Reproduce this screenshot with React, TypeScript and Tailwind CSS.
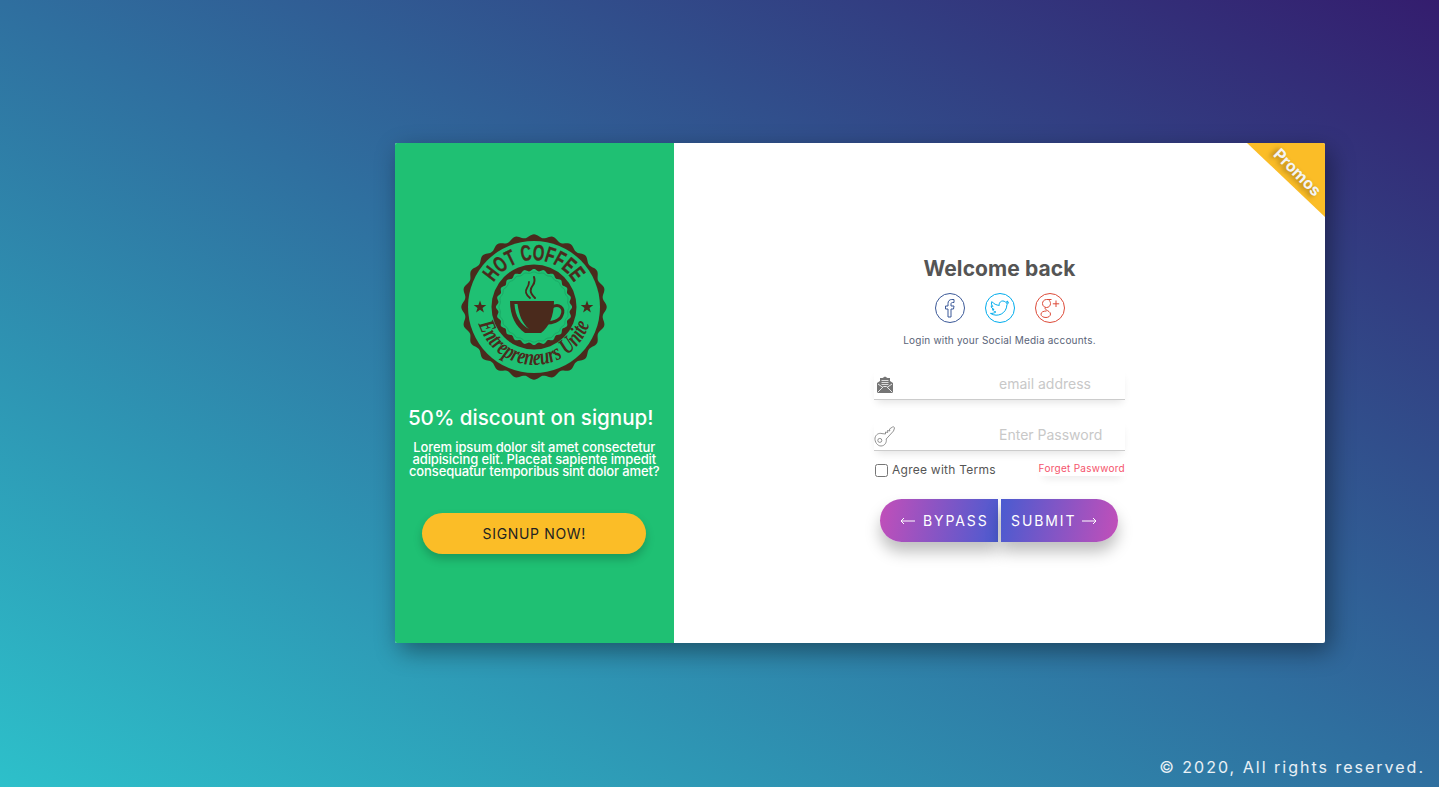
const FONT = "font-['Inter','Noto_Sans',sans-serif]";

// wavy edge of the badge, r swings around the base radius
function scallop(r: number, amp: number, waves: number) {
  const pts: string[] = [];
  for (let i = 0; i < 360; i++) {
    const t = (i / 360) * Math.PI * 2;
    const rr = r + amp * Math.cos(waves * t);
    pts.push(`${(75 + rr * Math.sin(t)).toFixed(2)},${(75 - rr * Math.cos(t)).toFixed(2)}`);
  }
  return pts.join(' ');
}

function Badge() {
  const dark = '#4a2a1c';
  const green = '#1fc073';
  return (
    <svg width="150" height="150" viewBox="0 0 150 150">
      <defs>
        <path id="arcTop" d="M 28 75 A 47 47 0 0 1 122 75" fill="none" />
        <path id="arcBottom" d="M 17 75 A 58 58 0 0 0 133 75" fill="none" />
      </defs>
      <polygon points={scallop(71, 1.7, 24)} fill={dark} />
      <circle cx="75" cy="75" r="66" fill={green} />
      <circle cx="75" cy="75" r="42.5" fill={dark} />
      <polygon points={scallop(37, 1.1, 24)} fill={green} />
      <polygon points={scallop(34.5, 0.6, 24)} fill="none" stroke="#179a5c" strokeWidth="0.6" />
      <text fontFamily="'Liberation Sans Narrow', 'Liberation Sans', sans-serif" fontWeight="700" fontSize="22" fill={dark} stroke={dark} strokeWidth="0.4">
        <textPath href="#arcTop" startOffset="50%" textAnchor="middle" textLength="96" lengthAdjust="spacingAndGlyphs">
          HOT COFFEE
        </textPath>
      </text>
      <text fontFamily="'Liberation Serif', serif" fontStyle="italic" fontWeight="700" fontSize="23" fill={dark}>
        <textPath href="#arcBottom" startOffset="50%" textAnchor="middle" textLength="148" lengthAdjust="spacingAndGlyphs">
          Entrepreneurs Unite
        </textPath>
      </text>
      <polygon points="21,68.5 22.6,73 27.3,73 23.5,75.9 24.9,80.4 21,77.7 17.1,80.4 18.5,75.9 14.7,73 19.4,73" fill={dark} />
      <polygon points="128,68.5 129.6,73 134.3,73 130.5,75.9 131.9,80.4 128,77.7 124.1,80.4 125.5,75.9 121.7,73 126.4,73" fill={dark} />
      {/* cup */}
      <path d="M51 69 H95 C95 84 90 95 82 101 H66 C57 95 51 84 51 69 Z" fill={dark} />
      <path d="M93 75 C100 71 106 76 103 83 C101 89 93 91 87 91" fill="none" stroke={dark} strokeWidth="3" />
      <path d="M55.5 72 C56 84 62 93 70 97 C63 91 60 83 58.5 72 Z" fill={green} />
      <path d="M76 66 C70 60 71 57 74 53 C76 50 76 48 75 45" fill="none" stroke={dark} strokeWidth="2" strokeLinecap="round" />
      <path d="M71 66 C66 62 66 59 68 56 C70 53 70 52 70 50" fill="none" stroke={dark} strokeWidth="1.8" strokeLinecap="round" />
    </svg>
  );
}

function MailIcon() {
  return (
    <svg width="18" height="18" viewBox="0 0 18 18" className="absolute left-[2px] top-[6px]">
      <path d="M1 7 L4 5 V2 H6.5 L9 0.5 L11.5 2 H14 V5 L17 7 V17 H1 Z" fill="#757575" />
      <path d="M5.5 4.5 H12.5 M5.5 6.5 H12.5 M5.5 8.5 H12.5" stroke="#e6e6e6" strokeWidth="0.9" />
      <path d="M1.5 16.5 L7.5 10.5 H10.5 L16.5 16.5 M2 8 L7 11.5 M16 8 L11 11.5" fill="none" stroke="#e6e6e6" strokeWidth="1" />
    </svg>
  );
}

function KeyIcon() {
  return (
    <svg width="21" height="21" viewBox="0 0 21 21" className="absolute left-[0px] top-[5px]" fill="none" stroke="#777" strokeWidth="0.8">
      <path d="M8 7.6 C5 6.6 1.6 8.5 1 12 C0.5 16 3.5 20 7 20 C10.5 20 13 16.5 12.2 13 L19.5 5 L20.5 2 C20.3 1 19.5 0.5 18.5 1 L15.5 3 L15.8 5 L13.5 4.5 L13.7 6.5 L11.5 6 L11.5 8 Z" />
      <circle cx="5.8" cy="14.4" r="2" />
    </svg>
  );
}

function FacebookIcon() {
  return (
    <svg width="20" height="20" viewBox="0 0 20 20" fill="none" stroke="currentColor" strokeWidth="1">
      <path d="M8 19 V11 H5.5 V8 H8 V5.5 C8 3 9.5 1.5 11.8 1.5 H14 V4.5 H12.5 C11.5 4.5 11 5 11 6 V8 H14 L13.5 11 H11 V19 Z" />
    </svg>
  );
}

function TwitterIcon() {
  return (
    <svg width="20" height="20" viewBox="0 0 20 20" fill="none" stroke="currentColor" strokeWidth="1">
      <path d="M18.5 4.5 C17.8 4.9 17 5.1 16.3 5.2 C17.1 4.7 17.6 4 17.9 3.1 C17.1 3.6 16.3 3.9 15.4 4.1 C14 2.6 11.7 2.6 10.3 4 C9.4 4.9 9 6.2 9.3 7.4 C6.4 7.2 3.7 5.9 1.9 3.6 C1 5.2 1.4 7.2 2.9 8.3 C2.3 8.3 1.7 8.1 1.2 7.8 C1.2 9.5 2.4 11 4.1 11.4 C3.6 11.5 3 11.5 2.5 11.4 C3 12.9 4.3 13.9 5.9 13.9 C4.3 15.1 2.4 15.6 0.5 15.4 C7.6 19.9 16.6 15.5 16.9 6.8 C17.5 6.2 18.1 5.4 18.5 4.5 Z" />
    </svg>
  );
}

function GooglePlusIcon() {
  return (
    <svg width="22" height="22" viewBox="0 0 22 22" fill="none" stroke="currentColor" strokeWidth="1">
      <path d="M12.5 2.5 H7.5 C5 2.5 3.5 4.5 3.5 6.5 C3.5 9 5.5 10.5 7.5 10.5 C9.8 10.5 11.5 8.8 11.5 6.5 C11.5 5 10.5 3.5 9.5 2.5" />
      <path d="M6.5 10.5 C5.8 11.2 6 12 7 12.7 C9 14 11.5 15 11.5 17 C11.5 19 9.5 20.5 7 20.5 C4 20.5 2 19 2 17.2 C2 15.2 4.2 14 7.5 14" />
      <path d="M17 3.5 V10 M13.8 6.8 H20.2" />
    </svg>
  );
}

function ArrowLeft() {
  return (
    <svg width="15" height="8" viewBox="0 0 15 8" fill="none" stroke="currentColor" strokeWidth="1" className="shrink-0">
      <path d="M15 4 H1 M4 1 L1 4 L4 7" />
    </svg>
  );
}

function ArrowRight() {
  return (
    <svg width="15" height="8" viewBox="0 0 15 8" fill="none" stroke="currentColor" strokeWidth="1" className="shrink-0">
      <path d="M0 4 H14 M11 1 L14 4 L11 7" />
    </svg>
  );
}

export default function App() {
  return (
    <div className={`${FONT} h-[787px] overflow-hidden flex flex-col bg-[linear-gradient(to_top_right,#2dc0ca_0%,#2f6f9f_50%,#341d6e_100%)]`}>
      <div className="pl-[394.5px] pt-[143px]">
        <div className="relative flex w-[930.5px] h-[500px] rounded-[2px] overflow-hidden bg-white shadow-[5px_8px_24px_rgba(0,0,0,0.4)]">
          {/* promo panel */}
          <div className="w-[279.5px] shrink-0 bg-[#1fc073] flex flex-col items-center pt-[89px] text-white">
            <Badge />
            <h2 className="mt-[22px] mr-[7px] text-[20.6px] leading-[28px] font-medium whitespace-nowrap">50% discount on signup!</h2>
            <p className="mt-[9px] text-[13px] leading-[12px] font-medium text-center whitespace-nowrap tracking-[-0.12px]">
              Lorem ipsum dolor sit amet consectetur
              <br />
              adipisicing elit. Placeat sapiente impedit
              <br />
              consequatur temporibus sint dolor amet?
            </p>
            <button className="mt-[36px] w-[224px] h-[41px] rounded-full bg-[#fbbd27] text-[#222] text-[14px] tracking-[0.65px] shadow-[0_5px_10px_rgba(0,0,0,0.2)]">
              SIGNUP NOW!
            </button>
          </div>

          {/* login form */}
          <div className="flex-1 flex flex-col items-center pt-[113px]">
            <div className="w-[251px] flex flex-col items-center">
              <h1 className="text-[21px] leading-[26px] font-bold tracking-[0.1px] text-[#555]">Welcome back</h1>
              <div className="mt-[11px] flex gap-[20px]">
                <span className="size-[30px] rounded-full border border-[#3b5998] text-[#3b5998] flex items-center justify-center">
                  <FacebookIcon />
                </span>
                <span className="size-[30px] rounded-full border border-[#00aced] text-[#00aced] flex items-center justify-center">
                  <TwitterIcon />
                </span>
                <span className="size-[30px] rounded-full border border-[#dd4b39] text-[#dd4b39] flex items-center justify-center">
                  <GooglePlusIcon />
                </span>
              </div>
              <p className="mt-[10px] text-[10px] leading-[14px] tracking-[0.2px] text-[#5a6478] whitespace-nowrap">Login with your Social Media accounts.</p>

              <div className="relative mt-[23px] w-full h-[30px] border-b border-[#ccc] shadow-[0_5px_8px_-3px_rgba(0,0,0,0.12)]">
                <MailIcon />
                <input placeholder="email address" className="w-full h-full pl-[125px] pb-[3px] bg-transparent text-[14px] outline-none placeholder:text-[#c8c8c8]" />
              </div>
              <div className="relative mt-[21px] w-full h-[30px] border-b border-[#ccc] shadow-[0_5px_8px_-3px_rgba(0,0,0,0.12)]">
                <KeyIcon />
                <input placeholder="Enter Password" className="w-full h-full pl-[125px] pb-[3px] bg-transparent text-[14px] outline-none placeholder:text-[#c8c8c8]" />
              </div>

              <div className="mt-[10px] w-full flex items-center justify-between">
                <label className="flex items-center gap-[4px] pl-[1px] text-[12px] tracking-[0.25px] text-[#555]">
                  <input type="checkbox" className="size-[13px] m-0" />
                  Agree with Terms
                </label>
                <a className="relative -top-[2px] text-[10px] tracking-[0.27px] text-[#f5536b] shadow-[0_6px_8px_-4px_rgba(0,0,0,0.1)] whitespace-nowrap">Forget Paswword</a>
              </div>

              <div className="mt-[20px] mr-[1px] flex gap-[3px]">
                <button className="w-[118px] h-[43px] pl-[20px] rounded-l-full text-white text-[14px] tracking-[1.9px] bg-[linear-gradient(100deg,#c24fb9,#4a5bd0)] shadow-[0_10px_15px_rgba(0,0,0,0.25)] whitespace-nowrap flex items-center gap-[8px]">
                  <ArrowLeft />
                  BYPASS
                </button>
                <button className="w-[117px] h-[43px] pl-[10px] rounded-r-full text-white text-[14px] tracking-[1.9px] bg-[linear-gradient(100deg,#4a5bd0,#c24fb9)] shadow-[0_10px_15px_rgba(0,0,0,0.25)] whitespace-nowrap flex items-center gap-[6px]">
                  SUBMIT
                  <ArrowRight />
                </button>
              </div>
            </div>
          </div>

          {/* corner ribbon */}
          <div className="absolute right-0 top-0 size-[78px] overflow-hidden">
            <div className="size-full bg-[#fbbd27] [clip-path:polygon(0_0,100%_0,100%_95%)]" />
            <span className="absolute right-[-3px] top-[20px] rotate-45 text-[16px] leading-[18px] font-bold text-[#f4f4f4] [text-shadow:-2px_3px_5px_rgba(0,0,0,0.35)]">Promos</span>
          </div>
        </div>
      </div>
      <p className="mt-[114px] pr-[14px] text-right text-[16px] leading-[20px] tracking-[2px] text-white/90">© 2020, All rights reserved.</p>
    </div>
  );
}
